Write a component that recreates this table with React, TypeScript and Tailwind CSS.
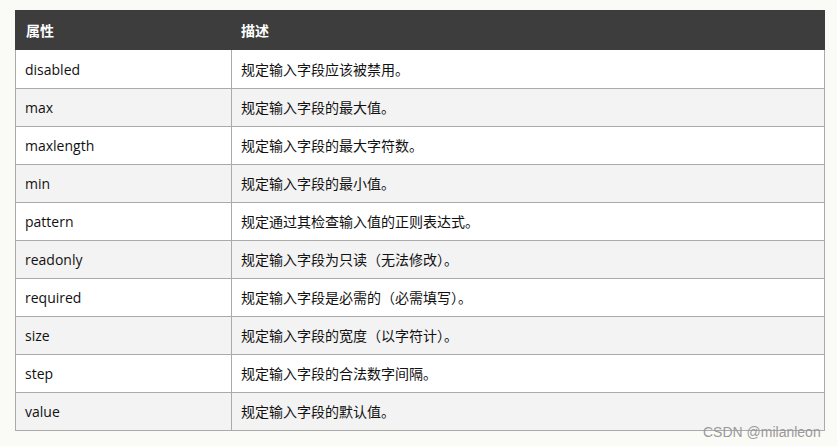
const rows: [string, string][] = [
  ["disabled", "规定输入字段应该被禁用。"],
  ["max", "规定输入字段的最大值。"],
  ["maxlength", "规定输入字段的最大字符数。"],
  ["min", "规定输入字段的最小值。"],
  ["pattern", "规定通过其检查输入值的正则表达式。"],
  ["readonly", "规定输入字段为只读（无法修改）。"],
  ["required", "规定输入字段是必需的（必需填写）。"],
  ["size", "规定输入字段的宽度（以字符计）。"],
  ["step", "规定输入字段的合法数字间隔。"],
  ["value", "规定输入字段的默认值。"],
];

const latin = "font-['Open_Sans','Noto_Sans_CJK_SC',sans-serif]";
const cjk = "font-['Noto_Sans_CJK_SC','Noto_Sans',sans-serif]";

export default function App() {
  return (
    <div className="relative w-[837px] h-[446px] bg-[#fafaf7] overflow-hidden">
      <div className="ml-[15px] pt-[10px] w-[810px]">
        <div className={`flex h-[40px] items-center bg-[#3d3d3d] text-white text-[14px] font-bold ${cjk}`}>
          <div className="w-[216px] pl-[11px]">属性</div>
          <div className="pl-[10px]">描述</div>
        </div>
        {rows.map(([name, desc], i) => (
          <div
            key={name}
            className={`flex border-x border-b border-[#aaaaaa] ${i === 0 ? "h-[39px]" : "h-[38px]"} ${i % 2 === 0 ? "bg-white" : "bg-[#f3f3f3]"}`}
          >
            <div className={`w-[216px] shrink-0 flex items-center border-r border-[#aaaaaa] pl-[9px] text-[14px] text-[#111] ${latin}`}>
              {name}
            </div>
            <div className={`flex items-center pl-[9px] text-[14px] text-[#111] ${cjk}`}>{desc}</div>
          </div>
        ))}
      </div>
      <div className="absolute left-[703px] top-[422px] text-[14px] text-[#9a9a9a] font-['Liberation_Sans',sans-serif]">
        CSDN @milanleon
      </div>
    </div>
  );
}
